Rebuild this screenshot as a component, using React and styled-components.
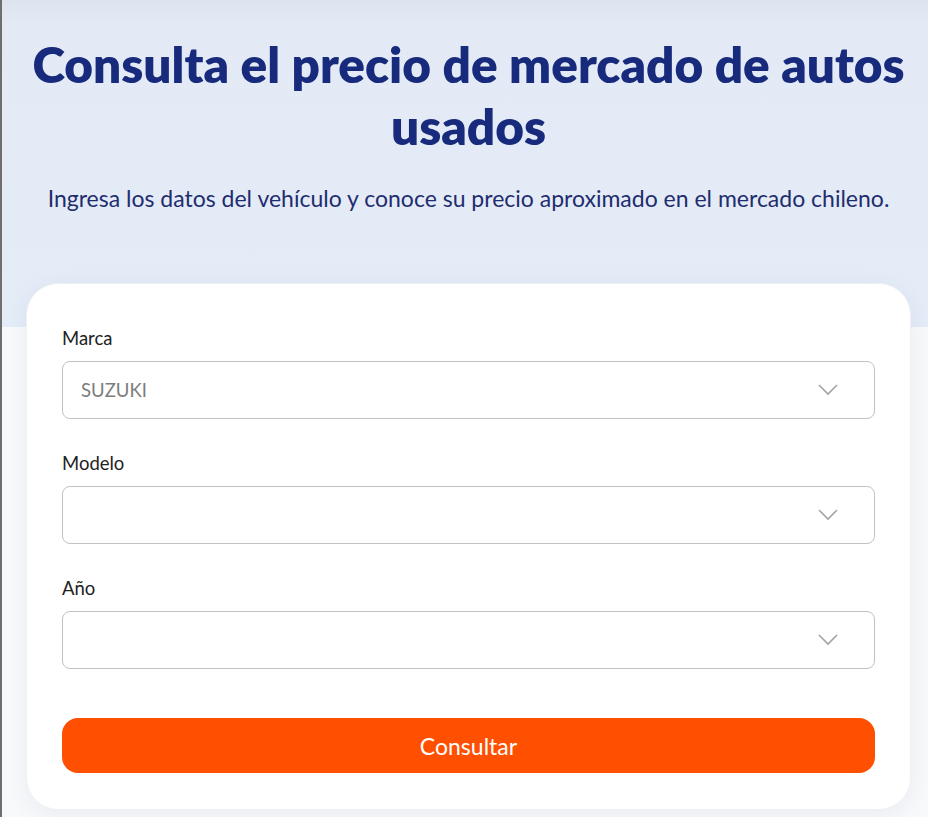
import React from "react";
import styled, { createGlobalStyle } from "styled-components";

const GlobalStyle = createGlobalStyle`
  * {
    box-sizing: border-box;
  }
  body {
    margin: 0;
    background-color: #f8f9fb;
    font-family: "Lato", "Open Sans", sans-serif;
    border-left: 2px solid #6e6e6e;
    min-height: 817px;
  }
`;

const Hero = styled.header`
  background: linear-gradient(180deg, #dde4ef 0%, #e3eaf6 8%, #e4ecf8 100%);
  padding: 33px 17px 0 24px;
  height: 327px;
  text-align: center;
`;

const Title = styled.h1`
  margin: 0;
  font-family: "Lato", sans-serif;
  font-weight: 800;
  font-size: 49.5px;
  line-height: 62px;
  color: #172a7c;
`;

const Subtitle = styled.p`
  margin: 27px 0 0;
  font-size: 23px;
  line-height: 28px;
  color: #1f2d6e;
`;

const Main = styled.main`
  padding: 0 17px 8px 24px;
`;

const Card = styled.form`
  position: relative;
  margin-top: -44px;
  background: #ffffff;
  border-radius: 32px;
  border: 1px solid #eef0f3;
  box-shadow: 0 6px 24px rgba(30, 40, 80, 0.06);
  padding: 42px 35px 36px;
  display: flex;
  flex-direction: column;
`;

const Field = styled.div`
  display: flex;
  flex-direction: column;
  margin-bottom: 32px;
`;

const Label = styled.label`
  font-size: 18.5px;
  line-height: 24px;
  color: #222222;
  margin-bottom: 11px;
`;

const SelectBox = styled.div`
  height: 58px;
  border: 1px solid #c2c2c2;
  border-radius: 8px;
  display: flex;
  align-items: center;
  justify-content: space-between;
  padding: 0 36px 0 18px;
  font-size: 18.5px;
  color: #7c7c7c;
  background: #ffffff;
`;

const Chevron = styled.svg`
  width: 20px;
  height: 12px;
  flex-shrink: 0;
`;

const Button = styled.button`
  margin-top: 17px;
  height: 55px;
  border: 0;
  border-radius: 16px;
  background-color: #ff4f00;
  color: #ffffff;
  font-family: inherit;
  font-size: 23px;
  cursor: pointer;
`;

const fields = [
  { label: "Marca", value: "SUZUKI" },
  { label: "Modelo", value: "" },
  { label: "Año", value: "" },
];

const Select = ({ value }) => (
  <SelectBox>
    <span>{value}</span>
    <Chevron viewBox="0 0 20 12">
      <path d="M1 1l9 9 9-9" fill="none" stroke="#a3a3a3" strokeWidth="1.6" />
    </Chevron>
  </SelectBox>
);

const App = () => {
  return (
    <>
      <GlobalStyle />
      <Hero>
        <Title>Consulta el precio de mercado de autos usados</Title>
        <Subtitle>
          Ingresa los datos del vehículo y conoce su precio aproximado en el
          mercado chileno.
        </Subtitle>
      </Hero>
      <Main>
        <Card onSubmit={(e) => e.preventDefault()}>
          {fields.map((f) => (
            <Field key={f.label}>
              <Label>{f.label}</Label>
              <Select value={f.value} />
            </Field>
          ))}
          <Button type="submit">Consultar</Button>
        </Card>
      </Main>
    </>
  );
};

export default App;
